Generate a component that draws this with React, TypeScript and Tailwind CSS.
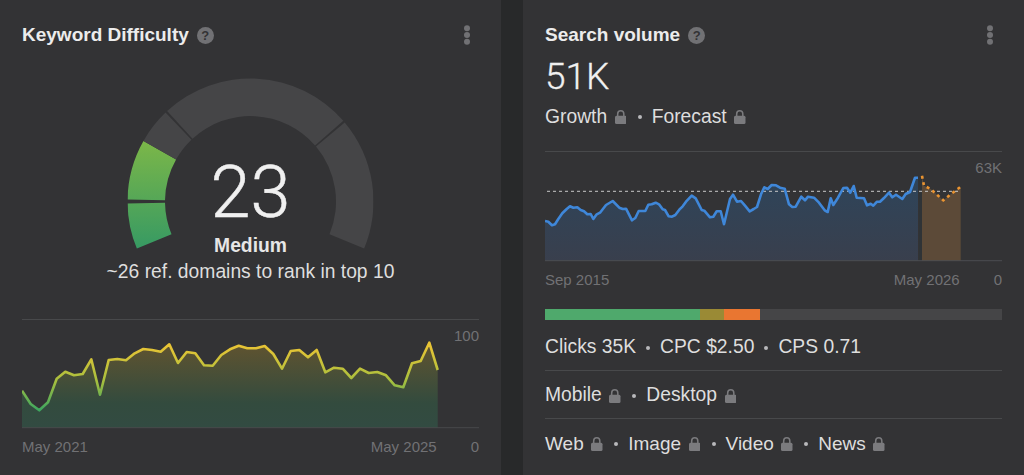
const kd: number[][] = [[66,272],[92,312],[118,331],[144,307],[170,236],[196,215],[222,226],[248,222],[274,178],[300,284],[326,180],[352,177],[378,181],[404,160],[430,147],[456,150],[482,155],[508,133],[534,189],[560,156],[586,160],[612,196],[638,197],[664,165],[690,148],[716,137],[742,145],[768,145],[794,138],[820,162],[846,206],[872,153],[898,150],[924,172],[950,150],[976,217],[1002,203],[1028,206],[1054,234],[1080,206],[1106,219],[1132,216],[1158,226],[1184,256],[1210,262],[1236,190],[1262,183],[1288,128],[1313,210]];
const kdPts = kd.map(([x, y]) => [x / 3, y / 3 + 300]);

const svA: number[][] = [[45,228],[55,230],[66,241],[75,238],[85,222],[97,205],[110,192],[120,184],[130,188],[142,187],[152,195],[162,199],[172,208],[182,207],[190,222],[200,208],[210,203],[228,180],[248,168],[268,188],[278,192],[288,191],[306,226],[316,219],[326,198],[346,198],[355,179],[365,178],[377,173],[387,178],[398,193],[405,195],[416,214],[426,215],[436,210],[448,194],[458,184],[468,170],[485,152],[497,160],[515,195],[523,197],[540,217],[550,215],[560,199],[572,199],[582,238],[600,162],[609,149],[621,170],[633,168],[645,182],[659,199],[671,192],[681,186],[693,148],[703,127],[713,132],[725,120],[738,121],[750,128]];
const svB: number[][] = [[32,131],[45,178],[55,186],[65,185],[82,155],[93,166],[102,155],[120,158],[135,173],[152,196],[161,201],[170,160],[178,180],[192,158],[208,129],[219,128],[229,143],[239,123],[248,158],[270,160],[279,181],[290,176],[298,182],[309,170],[318,170],[329,160],[345,143],[355,157],[366,149],[385,162],[395,147],[408,141],[423,98],[432,98]];
const fc: number[][] = [[444,92],[450,122],[470,132],[490,150],[508,166],[530,148],[560,125]];
const svPts = [...svA.map(([x, y]) => [530 + x / 3, 145 + y / 3]), ...svB.map(([x, y]) => [774 + x / 3, 145 + y / 3])];
const fcPts = fc.map(([x, y]) => [774 + x / 3, 145 + y / 3]);

const toLine = (p: number[][]) => p.map(([x, y]) => `${x.toFixed(1)},${y.toFixed(1)}`).join(" ");
const toArea = (p: number[][], base: number) => `${toLine(p)} ${p[p.length - 1][0].toFixed(1)},${base} ${p[0][0].toFixed(1)},${base}`;

function polar(r: number, deg: number) {
  const a = (deg * Math.PI) / 180;
  return [123 - r * Math.cos(a), 123.5 - r * Math.sin(a)];
}
function arc(from: number, to: number) {
  const R = 123, r = 85.5;
  const [a, b] = polar(R, from), [c, d] = polar(R, to), [e, f] = polar(r, to), [g, h] = polar(r, from);
  const large = to - from > 180 ? 1 : 0;
  return `M${a.toFixed(2)} ${b.toFixed(2)}A${R} ${R} 0 ${large} 1 ${c.toFixed(2)} ${d.toFixed(2)}L${e.toFixed(2)} ${f.toFixed(2)}A${r} ${r} 0 ${large} 0 ${g.toFixed(2)} ${h.toFixed(2)}Z`;
}

function Help() {
  return (
    <span className="ml-[8px] flex h-[17px] w-[17px] items-center justify-center rounded-full bg-[#717174] text-[13px] font-bold leading-none text-[#333335]">?</span>
  );
}
function Dots() {
  return (
    <svg width="8" height="20" viewBox="0 0 8 20" className="ml-auto">
      <circle cx="4" cy="3.2" r="3" fill="#717174" />
      <circle cx="4" cy="10" r="3" fill="#717174" />
      <circle cx="4" cy="16.8" r="3" fill="#717174" />
    </svg>
  );
}
function Lock() {
  return (
    <svg width="11.5" height="14" viewBox="0 0 12 14" preserveAspectRatio="none" className="ml-[7.5px] shrink-0">
      <path d="M2.8 6.5V4a3.2 3.2 0 0 1 6.4 0V6.5" fill="none" stroke="#7b7b7e" strokeWidth="1.6" />
      <rect x="0" y="5.8" width="12" height="8.2" rx="1.5" fill="#7b7b7e" />
    </svg>
  );
}
function Sep({ locked }: { locked?: boolean }) {
  return <span className={`mr-[10px] h-[4px] w-[4px] shrink-0 rounded-full bg-[#b9b9bb] ${locked ? "ml-[11.5px]" : "ml-[10px]"}`} />;
}
function Header({ title }: { title: string }) {
  return (
    <div className="mt-[25px] flex h-[20px] items-center pr-[8px]">
      <span className="text-[19px] font-bold leading-[20px] text-[#ececec]">{title}</span>
      <Help />
      <Dots />
    </div>
  );
}
function Row({ items, border }: { items: string[]; border?: boolean }) {
  return (
    <div className={`flex h-[48px] items-center pt-[2px] ${border ? "border-b border-[#48494b] text-[19.3px]" : "text-[19px]"}`}>
      {items.map((t, i) => (
        <span key={t} className="flex items-center">
          {i > 0 && <Sep locked />}
          <span>{t}</span>
          <Lock />
        </span>
      ))}
    </div>
  );
}

export default function App() {
  return (
    <div className="flex h-[475px] w-[1024px] overflow-hidden bg-[#28292a] text-[19.3px] text-[#dedede]" style={{ fontFamily: '"Liberation Sans", Arial, sans-serif' }}>
      {/* Keyword Difficulty */}
      <section className="h-full w-[501px] bg-[#333335] pl-[22px] pr-[22px]">
        <Header title="Keyword Difficulty" />
        <div className="relative mt-[33px] flex h-[207px] justify-center">
          <svg width="246" height="175" viewBox="0 0 246 175" className="-translate-x-[0.5px]">
            <defs>
              <linearGradient id="gaugeGreen" gradientUnits="userSpaceOnUse" x1="0" y1="62" x2="0" y2="170">
                <stop offset="0" stopColor="#7cb748" />
                <stop offset="1" stopColor="#379a63" />
              </linearGradient>
            </defs>
            <path d={arc(-22.5, -0.9)} fill="url(#gaugeGreen)" />
            <path d={arc(0.9, 29.5)} fill="url(#gaugeGreen)" />
            <path d={arc(29.5, 46.3)} fill="#454547" />
            <path d={arc(47.3, 139)} fill="#454547" />
            <path d={arc(140, 202.5)} fill="#454547" />
          </svg>
          <div className="absolute inset-x-0 top-[82px] flex flex-col items-center">
            <span className="h-[66px] text-[72px] font-light leading-[66px] text-[#f0f0f0] [-webkit-text-stroke:0.5px_#f0f0f0]" style={{ fontFamily: 'Roboto, "Liberation Sans", sans-serif' }}>23</span>
            <span className="mt-[8px] h-[24px] font-bold leading-[24px] text-[#e6e6e6]">Medium</span>
            <span className="mt-[1px] leading-[26px]">~26 ref. domains to rank in top 10</span>
          </div>
        </div>
        <div className="relative mt-[34px] h-[109px] border-t border-[#48494b]">
          <svg width="457" height="109" viewBox="22 320 457 109" className="block">
            <defs>
              <linearGradient id="kdLine" gradientUnits="userSpaceOnUse" x1="0" y1="345" x2="0" y2="410">
                <stop offset="0" stopColor="#e9c435" />
                <stop offset="0.55" stopColor="#a8bf3e" />
                <stop offset="1" stopColor="#3fa65f" />
              </linearGradient>
              <linearGradient id="kdArea" gradientUnits="userSpaceOnUse" x1="0" y1="345" x2="0" y2="428">
                <stop offset="0" stopColor="#5f5330" />
                <stop offset="0.7" stopColor="#334b3e" />
                <stop offset="1" stopColor="#324b42" />
              </linearGradient>
            </defs>
            <polygon points={toArea(kdPts, 428)} fill="url(#kdArea)" />
            <line x1="22" x2="479" y1="427.7" y2="427.7" stroke="#48494b" strokeWidth="1" />
            <polyline points={toLine(kdPts)} fill="none" stroke="url(#kdLine)" strokeWidth="2.6" strokeLinejoin="round" />
          </svg>
          <span className="absolute right-0 top-[6px] text-[15px] leading-[20px] text-[#717174]">100</span>
        </div>
        <div className="mt-[9px] flex h-[20px] items-center text-[15px] text-[#717174]">
          <span>May 2021</span>
          <span className="ml-auto mr-[34px]">May 2025</span>
          <span>0</span>
        </div>
      </section>

      {/* Search volume */}
      <section className="ml-[22px] h-full w-[501px] bg-[#333335] pl-[22px] pr-[22px]">
        <Header title="Search volume" />
        <div className="mt-[12px] h-[40px] text-[37px] font-light leading-[40px] text-[#f0f0f0] [-webkit-text-stroke:0.3px_#f0f0f0]" style={{ fontFamily: 'Roboto, "Liberation Sans", sans-serif' }}>51K</div>
        <div className="mt-[8px] flex h-[24px] items-center">
          <span>Growth</span><Lock /><Sep locked /><span>Forecast</span><Lock />
        </div>
        <div className="relative mt-[22px] h-[110px] border-t border-[#48494b]">
          <svg width="457" height="110" viewBox="545 152 457 110" className="block">
            <defs>
              <linearGradient id="svArea" gradientUnits="userSpaceOnUse" x1="0" y1="185" x2="0" y2="261">
                <stop offset="0" stopColor="#2f4459" />
                <stop offset="1" stopColor="#393f4d" />
              </linearGradient>
            </defs>
            <polygon points={toArea(svPts, 261)} fill="url(#svArea)" />
            <rect x="919" y="178" width="3" height="83" fill="#2f3336" />
            <polygon points={toArea(fcPts, 261)} fill="#5c4a38" />
            <line x1="545" x2="1002" y1="260.7" y2="260.7" stroke="#4c4d50" strokeWidth="1" />
            <line x1="547" x2="961" y1="191.3" y2="191.3" stroke="#c9c9c9" strokeWidth="1" strokeDasharray="3 3" />
            <polyline points={toLine(svPts)} fill="none" stroke="#3f87d9" strokeWidth="2.6" strokeLinejoin="round" />
            <polyline points={toLine(fcPts)} fill="none" stroke="#ea9431" strokeWidth="2.6" strokeDasharray="3 3.6" />
          </svg>
          <span className="absolute right-0 top-[6px] text-[15px] leading-[20px] text-[#717174]">63K</span>
        </div>
        <div className="mt-[9px] flex h-[20px] items-center text-[15px] text-[#717174]">
          <span>Sep 2015</span>
          <span className="ml-auto mr-[34px]">May 2026</span>
          <span>0</span>
        </div>
        <div className="mt-[19px] flex h-[11px] bg-[#454547]">
          <div className="w-[155px] bg-[#4fa96c]" />
          <div className="w-[23.5px] bg-[#9a8a35]" />
          <div className="w-[36.5px] bg-[#e97631]" />
        </div>
        <div className="mt-[3px] flex h-[48px] items-center border-b border-[#48494b] pt-[2px]">
          <span>Clicks 35K</span><Sep /><span>CPC $2.50</span><Sep /><span>CPS 0.71</span>
        </div>
        <Row items={["Mobile", "Desktop"]} border />
        <Row items={["Web", "Image", "Video", "News"]} />
      </section>
    </div>
  );
}
